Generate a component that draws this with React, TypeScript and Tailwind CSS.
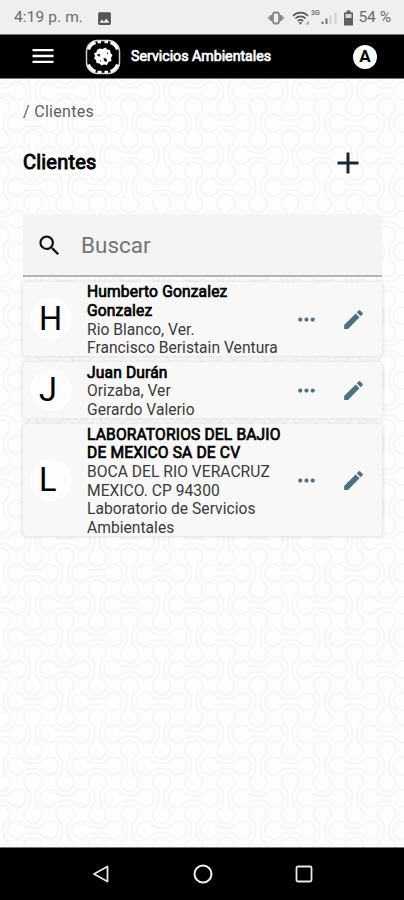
import { MdAdd, MdEdit, MdImage, MdMenu, MdMoreHoriz, MdSearch } from 'react-icons/md';

interface Client {
  initial: string;
  name: string[];
  details: string[];
  height: string;
}

const CLIENTS: Client[] = [
  {
    initial: 'H',
    name: ['Humberto Gonzalez', 'Gonzalez'],
    details: ['Rio Blanco, Ver.', 'Francisco Beristain Ventura'],
    height: 'h-[74px]',
  },
  {
    initial: 'J',
    name: ['Juan Durán'],
    details: ['Orizaba, Ver', 'Gerardo Valerio'],
    height: 'h-[56px]',
  },
  {
    initial: 'L',
    name: ['LABORATORIOS DEL BAJIO', 'DE MEXICO SA DE CV'],
    details: ['BOCA DEL RIO VERACRUZ', 'MEXICO. CP 94300', 'Laboratorio de Servicios', 'Ambientales'],
    height: 'h-[112px]',
  },
];

const LINK_PATH =
  'M-9 -4.5C-11 -7.5 -13 -8.8 -16.5 -8.8A8.8 8.8 0 0 0 -16.5 8.8C-13 8.8 -11 7.5 -9 4.5C-6 2 6 2 9 4.5C11 7.5 13 8.8 16.5 8.8A8.8 8.8 0 0 0 16.5 -8.8C13 -8.8 11 -7.5 9 -4.5C6 -2 -6 -2 -9 -4.5Z';

function PatternBackground() {
  return (
    <svg className="absolute inset-0 w-full h-full" aria-hidden="true">
      <defs>
        <pattern id="links" x="0.8" y="44" width="64.3" height="64.3" patternUnits="userSpaceOnUse">
          <g fill="#fefefe" stroke="#f6f6f6" strokeWidth="1.9">
            <path d={LINK_PATH} transform="translate(32.15 0)" />
            <path d={LINK_PATH} transform="translate(32.15 64.3)" />
            <path d={LINK_PATH} transform="translate(0 32.15)" />
            <path d={LINK_PATH} transform="translate(64.3 32.15)" />
            <path d={LINK_PATH} transform="translate(0 0) rotate(90)" />
            <path d={LINK_PATH} transform="translate(64.3 0) rotate(90)" />
            <path d={LINK_PATH} transform="translate(0 64.3) rotate(90)" />
            <path d={LINK_PATH} transform="translate(64.3 64.3) rotate(90)" />
            <path d={LINK_PATH} transform="translate(32.15 32.15) rotate(90)" />
          </g>
        </pattern>
      </defs>
      <rect width="100%" height="100%" fill="#fdfdfd" />
      <rect width="100%" height="100%" fill="url(#links)" />
    </svg>
  );
}

function StatusBar() {
  return (
    <div className="h-[34px] shrink-0 bg-[#efefef] flex items-center text-[#6b6b6b] pl-[14px] pr-[13px] pt-[2px]">
      <span className="text-[15.5px] tracking-[0.1px] w-[82px] whitespace-nowrap">4:19 p. m.</span>
      <MdImage className="w-[17px] h-[17px] text-[#555]" />
      <div className="ml-auto flex items-center">
        <svg width="16" height="14" viewBox="0 0 16 14" fill="none" stroke="#858585">
          <rect x="5" y="1.5" width="6" height="11" rx="2" strokeWidth="1.8" />
          <path d="M3 4v6M13 4v6" strokeWidth="2" />
          <path d="M1 5.5v3M15 5.5v3" strokeWidth="1.5" />
        </svg>
        <svg className="ml-[8px]" width="47" height="18" viewBox="0 0 47 18" fill="none">
          <g stroke="#5a5a5a" strokeWidth="1.7">
            <path d="M1 6.8a10.5 10.5 0 0 1 15 0" />
            <path d="M3.4 9.5a7 7 0 0 1 10.2 0" />
            <path d="M5.8 12a4 4 0 0 1 5.4 0" />
          </g>
          <path d="M6.5 13.2h4l-2 2.5z" fill="#5a5a5a" />
          <path d="M13 15.5h4v-4z" fill="#aaa" />
          <text x="19" y="6" fontSize="7" fontWeight="700" fill="#777">3G</text>
          <path d="M30.5 15v-2.5M34.5 15V9.5" stroke="#777" strokeWidth="2" />
          <path d="M38.5 15V6.5M43.5 15V3.5" stroke="#d0d0d0" strokeWidth="2" />
        </svg>
        <svg className="ml-[4px]" width="11" height="16" viewBox="0 0 11 16">
          <path d="M3.5 0.5h4v2H10v13H1v-13h2.5z" fill="#606060" />
          <path d="M2.5 4h6v4h-6z" fill="#d4d4d4" />
        </svg>
        <span className="ml-[4px] text-[15.5px] whitespace-nowrap">54 %</span>
      </div>
    </div>
  );
}

function Logo() {
  return (
    <svg className="w-[36px] h-[36px]" viewBox="0 0 36 36">
      <rect x="1.5" y="1.5" width="33" height="33" rx="11" fill="none" stroke="#d0d0d0" strokeWidth="1.5" />
      <g fill="none" stroke="#fff" strokeWidth="3.2">
        <path d="M3.5 10.5q1.500-5 7-7" />
        <path d="M25.500 3.500q5.500 2 7 7" />
        <path d="M32.500 25.500q-1.500 5-7 7" />
        <path d="M10.500 32.500q-5.500-2-7-7" />
        <path d="M12.500 3h3.500M19.500 3h3.500M12.500 33h4M19.500 33h3.500" strokeWidth="2.5" />
      </g>
      <path
        d="M14.5 9.500l3 .5 3-1.500 1.500 2 3 .5.5 3 2 2-1.500 3 .5 3-3 1-1.500 3-3-.5-2.500 1-2-2-3-.5-.5-3-2-1.500 1-2.500-1-2.500 2.500-1.500.5-2z"
        fill="#fff"
      />
      <path d="M12.500 15l3 .5-1 2-2-.5zM18.500 19l3 .500.500 3.500-3-1zM15 21l1.500 1-1 1zM22 13l1.500 1-1 1.500z" fill="#111" />
    </svg>
  );
}

function Header() {
  return (
    <header className="h-[45px] shrink-0 bg-black flex items-center pl-[29px] pr-[27px] border-t border-b border-[#777] text-white">
      <MdMenu className="w-[28px] h-[28px] -mt-[2px]" />
      <div className="ml-[28px]">
        <Logo />
      </div>
      <span className="ml-[10px] text-[14.2px] whitespace-nowrap [-webkit-text-stroke:0.7px]">
        Servicios Ambientales
      </span>
      <div className="ml-auto w-6 h-6 rounded-full bg-white text-black text-[17px] font-bold flex items-center justify-center">
        A
      </div>
    </header>
  );
}

function ClientCard({ client }: { client: Client }) {
  return (
    <div
      className={`${client.height} bg-[#f8f8f8] rounded-[4px] shadow-[0_0_5px_rgba(0,0,0,0.16)] flex items-center pl-[7px]`}
    >
      <div className="w-[42px] h-[42px] rounded-full bg-[#fdfdfd] text-black text-[32.5px] flex items-center pl-[9px]">
        {client.initial}
      </div>
      <div className="ml-[15px] pt-[3px] w-[207px] text-[15.6px] leading-[18.6px] tracking-[0.03px] text-[#3a3a3a] whitespace-nowrap">
        {client.name.map((line) => (
          <div key={line} className="text-black tracking-[0.15px] [-webkit-text-stroke:0.7px]">
            {line}
          </div>
        ))}
        {client.details.map((line) => (
          <div key={line}>{line}</div>
        ))}
      </div>
      <button type="button" className="text-[#4f7080]" title="Opciones">
        <MdMoreHoriz className="w-[25px] h-[25px]" />
      </button>
      <button type="button" className="ml-[22px] text-[#4f7080]" title="Editar">
        <MdEdit className="w-[25px] h-[25px]" />
      </button>
    </div>
  );
}

function NavigationBar() {
  return (
    <nav className="h-[53px] shrink-0 bg-black border-t border-[#777] flex items-center justify-between pl-[92px] pr-[91px]">
      <svg width="18" height="20" viewBox="0 0 18 20" fill="none" stroke="#e8e8e8" strokeWidth="1.8" strokeLinejoin="round">
        <path d="M15.5 2.5v15L2 10z" />
      </svg>
      <svg width="20" height="20" viewBox="0 0 20 20" fill="none" stroke="#f0f0f0" strokeWidth="2">
        <circle cx="10" cy="10" r="8.5" />
      </svg>
      <svg width="18" height="18" viewBox="0 0 18 18" fill="none" stroke="#e8e8e8" strokeWidth="1.8">
        <rect x="1.5" y="1.5" width="15" height="15" rx="1.5" />
      </svg>
    </nav>
  );
}

export default function App() {
  return (
    <div className="w-[404px] h-[900px] flex flex-col overflow-hidden font-[Roboto,sans-serif]">
      <StatusBar />
      <Header />
      <main className="relative flex-1 min-h-0">
        <PatternBackground />
        <div className="relative pl-[23px] pr-[22px] pt-[23px]">
          <div className="text-[16px] leading-5 tracking-[0.3px] text-[#606060]">/ Clientes</div>

          <div className="mt-[25px] h-[32px] flex items-center justify-between pr-[16px]">
            <h1 className="text-[20px] leading-[30px] -mt-[2px] tracking-[0.2px] text-black [-webkit-text-stroke:0.9px]">
              Clientes
            </h1>
            <MdAdd className="w-[36px] h-[36px] text-[#1c2633]" />
          </div>

          {/* Search field */}
          <div className="mt-[35px] h-[63px] bg-[#f4f4f4] border-b-2 border-[#b4b4b4] rounded-t-[4px] flex items-center pl-[13px]">
            <MdSearch className="w-[27px] h-[27px] mt-[2px] text-[#111]" />
            <span className="ml-[18px] pt-[3px] text-[22.5px] text-[#757575]">Buscar</span>
          </div>

          {/* Client list */}
          <div className="mt-[5px] flex flex-col gap-[6px]">
            {CLIENTS.map((client) => (
              <ClientCard key={client.initial} client={client} />
            ))}
          </div>
        </div>
      </main>
      <NavigationBar />
    </div>
  );
}
